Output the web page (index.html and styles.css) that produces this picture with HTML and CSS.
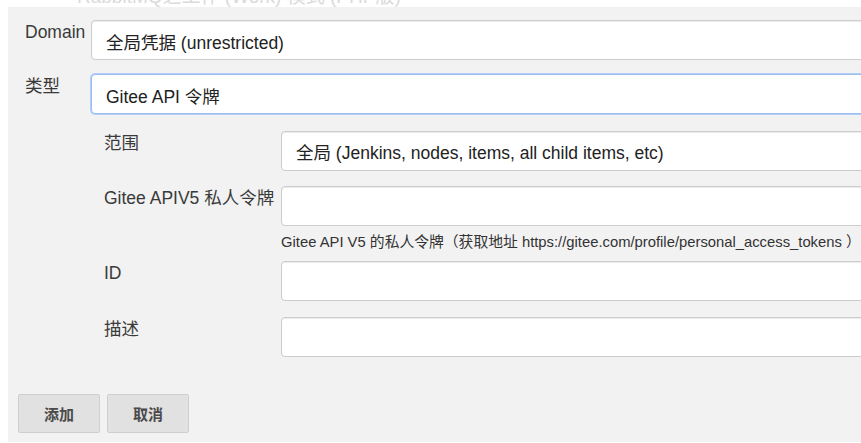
FILE: index.html
```html
<!DOCTYPE html>
<html lang="zh">
<head>
<meta charset="utf-8">
<title>添加凭据</title>
<link rel="stylesheet" href="styles.css">
</head>
<body>
<div class="page-title"><div class="page-title-text">RabbitMQ之工作 (Work) 模式 (PHP版)</div></div>
<form class="panel">
  <div class="row row-domain">
    <label class="label">Domain</label>
    <div class="field">
      <select class="control control-top">
        <option>全局凭据 (unrestricted)</option>
      </select>
    </div>
  </div>
  <div class="row row-kind">
    <label class="label">类型</label>
    <div class="field">
      <select class="control control-top control-focus">
        <option>Gitee API 令牌</option>
      </select>
    </div>
  </div>
  <div class="sub">
    <div class="row">
      <label class="label sub-label">范围</label>
      <div class="field">
        <select class="control control-sub">
          <option>全局 (Jenkins, nodes, items, all child items, etc)</option>
        </select>
      </div>
    </div>
    <div class="row row-next">
      <label class="label sub-label">Gitee APIV5 私人令牌</label>
      <div class="field">
        <input class="control" type="text">
        <div class="hint">Gitee API V5 的私人令牌（获取地址 https://gitee.com/profile/personal_access_tokens ）</div>
      </div>
    </div>
    <div class="row row-id">
      <label class="label sub-label">ID</label>
      <div class="field">
        <input class="control" type="text">
      </div>
    </div>
    <div class="row row-next2">
      <label class="label sub-label">描述</label>
      <div class="field">
        <input class="control" type="text">
      </div>
    </div>
  </div>
  <div class="buttons">
    <button type="button" class="btn">添加</button>
    <button type="button" class="btn">取消</button>
  </div>
</form>
</body>
</html>
```

FILE: styles.css
```css
html, body {
  margin: 0;
  padding: 0;
  background: #ffffff;
}
body {
  width: 861px;
  height: 443px;
  overflow: hidden;
  font-family: "Liberation Sans", Arial, "Noto Sans CJK SC", sans-serif;
  color: #333333;
}
.page-title {
  height: 7px;
  overflow: hidden;
}
.page-title-text {
  margin-top: -14px;
  padding-left: 77px;
  font-size: 19px;
  line-height: 22px;
  color: #dadada;
  white-space: nowrap;
}
.panel {
  margin: 0 0 0 8px;
  width: 940px;
  background: #f2f2f2;
  padding: 13px 0 9px 0;
  box-sizing: border-box;
  height: 435px;
}
.row {
  display: flex;
  align-items: flex-start;
}
.row-kind {
  margin-top: 14px;
}
.label {
  flex: none;
  width: 83px;
  box-sizing: border-box;
  padding: 2px 0 0 17px;
  font-size: 17.5px;
  line-height: 20px;
  color: #3a3a3a;
  white-space: nowrap;
}
.field {
  flex: 1;
  min-width: 0;
}
.control {
  display: block;
  width: 100%;
  height: 40px;
  box-sizing: border-box;
  margin: 0;
  border: 1px solid #cccccc;
  border-radius: 4px;
  background: #ffffff;
  box-shadow: inset 0 1px 1px rgba(0, 0, 0, 0.08);
  font-family: "Liberation Sans", Arial, "Noto Sans CJK SC", sans-serif;
  font-size: 17.5px;
  color: #222222;
  padding: 0 14px;
  outline: none;
  -webkit-appearance: none;
  appearance: none;
}
.control-top {
  padding-top: 6px;
  padding-bottom: 0;
}
.control-sub {
  padding-top: 3px;
  padding-bottom: 0;
}
.control-focus {
  border-color: #9dbcf2;
  box-shadow: 0 0 0 1px #b5cef6;
}
.sub {
  margin-top: 17px;
  padding-left: 96px;
}
.sub-label {
  width: 177px;
  padding-left: 0;
}
.row-next {
  margin-top: 15px;
}
.hint {
  width: fit-content;
  margin-top: 6px;
  font-size: 14.8px;
  line-height: 20px;
  color: #333333;
  white-space: nowrap;
}
.row-id {
  margin-top: 9px;
}
.row-next2 {
  margin-top: 16px;
}
.buttons {
  display: flex;
  gap: 7px;
  margin-top: 37px;
  padding-left: 10px;
}
.btn {
  width: 82px;
  height: 39px;
  box-sizing: border-box;
  border: 1px solid #cfcfcf;
  border-radius: 2px;
  background: #e1e1e1;
  font-family: "Liberation Sans", Arial, "Noto Sans CJK SC", sans-serif;
  font-size: 15px;
  font-weight: bold;
  color: #4a4a4a;
  padding: 0;
}
```
